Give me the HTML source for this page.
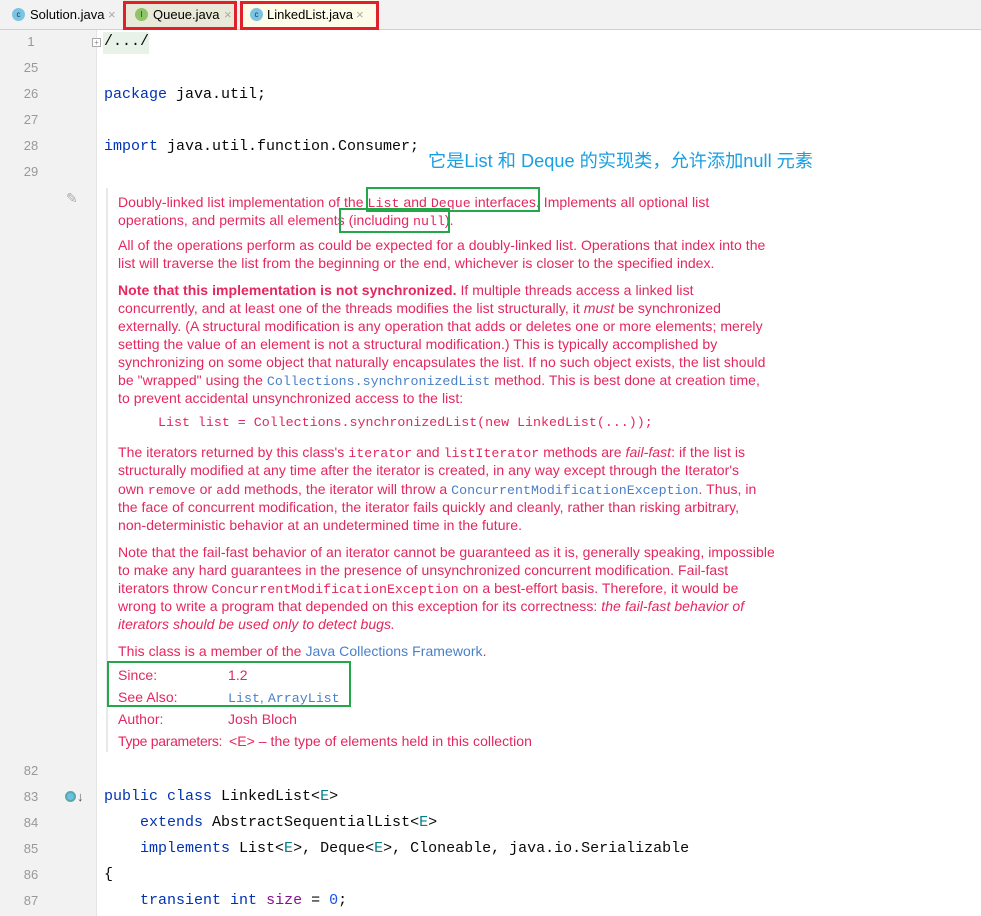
<!DOCTYPE html>
<html><head><meta charset="utf-8"><style>
*{margin:0;padding:0;box-sizing:border-box}
body{width:981px;height:916px;overflow:hidden;background:#fff;position:relative;font-family:"Liberation Sans","Noto Sans CJK SC",sans-serif}
.tabs{position:absolute;left:0;top:0;width:981px;height:30px;background:#f2f2f2;border-bottom:1px solid #d0d0d0}
.tab{position:absolute;top:0;height:30px;font-size:13px;line-height:30px;color:#000}
.ic{position:absolute;top:8px;width:13px;height:13px;border-radius:50%;font-size:8px;line-height:13px;text-align:center;color:#234;font-family:"Liberation Sans",sans-serif}
.x{color:#aaa;position:absolute;top:0;font-size:13px}
.gut{position:absolute;left:0;top:30px;width:97px;height:886px;background:#f2f2f2;border-right:1px solid #e4e4e4}
.ln{position:absolute;left:0;width:62px;text-align:center;font-family:"Liberation Sans",sans-serif;font-size:13px;color:#999}
.code{position:absolute;left:104px;font-family:"Liberation Mono",monospace;font-size:15px;color:#080808;white-space:pre}
.kw{color:#0033b3}.tp{color:#007e8a}.num{color:#1750eb}.fld{color:#871094}
.d{position:absolute;left:118px;font-size:14px;letter-spacing:0.05px;color:#e5265f;white-space:nowrap;line-height:18px}
.m{font-family:"Liberation Mono",monospace;font-size:13.3px;letter-spacing:0}
.l{color:#4a80c8}
.box{position:absolute;border:2px solid #22a84a}
.red{position:absolute;border:3px solid #e0202a}
</style></head><body>
<div class="tabs">
 <div class="tab" style="left:0;width:122px"><div class="ic" style="left:12px;background:#7cc4e4">c</div><span style="position:absolute;left:30px">Solution.java</span><span class="x" style="left:108px">×</span></div>
 <div class="tab" style="left:124px;width:112px;background:#e9e9d9"><div class="ic" style="left:11px;background:#8dc46a">I</div><span style="position:absolute;left:29px">Queue.java</span><span class="x" style="left:100px">×</span></div>
 <div class="tab" style="left:241px;width:137px;background:#fcfce8;border-bottom:2px solid #4083c9"><div class="ic" style="left:9px;background:#7cc4e4">c</div><span style="position:absolute;left:26px">LinkedList.java</span><span class="x" style="left:115px">×</span></div>
</div>
<div class="red" style="left:123px;top:1px;width:114px;height:29px"></div>
<div class="red" style="left:240px;top:1px;width:139px;height:29px"></div>
<div class="gut"></div>
<div style="position:absolute;left:106px;top:188px;width:2px;height:564px;background:#e8e8e8"></div>
<div style="position:absolute;left:92px;top:38px;width:9px;height:9px;border:1px solid #aaa;background:#fff;font-size:8px;line-height:7px;text-align:center;color:#888">+</div>
<div style="position:absolute;left:103px;top:32px;width:46px;height:22px;background:#e8f2e8"></div>
<div style="position:absolute;left:66px;top:190px;width:12px;height:12px;color:#aaa;font-size:14px">✎</div>
<div style="position:absolute;left:65px;top:791px;width:11px;height:11px;border-radius:50%;background:#6cbfe0;border:2px solid #5aa;"></div>
<div style="position:absolute;left:77px;top:789px;font-size:13px;color:#555">↓</div>

<div class="ln" style="top:34px">1</div>
<div class="ln" style="top:60px">25</div>
<div class="ln" style="top:86px">26</div>
<div class="ln" style="top:112px">27</div>
<div class="ln" style="top:138px">28</div>
<div class="ln" style="top:164px">29</div>
<div class="ln" style="top:763px">82</div>
<div class="ln" style="top:789px">83</div>
<div class="ln" style="top:815px">84</div>
<div class="ln" style="top:841px">85</div>
<div class="ln" style="top:867px">86</div>
<div class="ln" style="top:893px">87</div>

<div class="code" style="top:33px">/.../</div>
<div class="code" style="top:86px"><span class="kw">package</span> java.util;</div>
<div class="code" style="top:138px"><span class="kw">import</span> java.util.function.Consumer;</div>
<div style="position:absolute;left:428px;top:147px;font-size:18.2px;color:#1a9fe0;white-space:nowrap">它是List 和 Deque 的实现类，允许添加null 元素</div>
<div class="code" style="top:788px"><span class="kw">public class</span> LinkedList&lt;<span class="tp">E</span>&gt;</div>
<div class="code" style="top:814px">    <span class="kw">extends</span> AbstractSequentialList&lt;<span class="tp">E</span>&gt;</div>
<div class="code" style="top:840px">    <span class="kw">implements</span> List&lt;<span class="tp">E</span>&gt;, Deque&lt;<span class="tp">E</span>&gt;, Cloneable, java.io.Serializable</div>
<div class="code" style="top:866px">{</div>
<div class="code" style="top:892px">    <span class="kw">transient int</span> <span class="fld">size</span> = <span class="num">0</span>;</div>

<div class="d" style="top:193px">Doubly-linked list implementation of the <span class="m">List</span> and <span class="m">Deque</span> interfaces. Implements all optional list</div>
<div class="d" style="top:211px">operations, and permits all elements (including <span class="m">null</span>).</div>
<div class="d" style="top:236px">All of the operations perform as could be expected for a doubly-linked list. Operations that index into the</div>
<div class="d" style="top:254px">list will traverse the list from the beginning or the end, whichever is closer to the specified index.</div>
<div class="d" style="top:281px"><b>Note that this implementation is not synchronized.</b> If multiple threads access a linked list</div>
<div class="d" style="top:299px">concurrently, and at least one of the threads modifies the list structurally, it <i>must</i> be synchronized</div>
<div class="d" style="top:317px">externally. (A structural modification is any operation that adds or deletes one or more elements; merely</div>
<div class="d" style="top:335px">setting the value of an element is not a structural modification.) This is typically accomplished by</div>
<div class="d" style="top:353px">synchronizing on some object that naturally encapsulates the list. If no such object exists, the list should</div>
<div class="d" style="top:371px">be "wrapped" using the <span class="m l">Collections.synchronizedList</span> method. This is best done at creation time,</div>
<div class="d" style="top:389px">to prevent accidental unsynchronized access to the list:</div>
<div class="d m" style="top:414px;left:158px">List list = Collections.synchronizedList(new LinkedList(...));</div>
<div class="d" style="top:443px">The iterators returned by this class's <span class="m">iterator</span> and <span class="m">listIterator</span> methods are <i>fail-fast</i>: if the list is</div>
<div class="d" style="top:461px">structurally modified at any time after the iterator is created, in any way except through the Iterator's</div>
<div class="d" style="top:480px">own <span class="m">remove</span> or <span class="m">add</span> methods, the iterator will throw a <span class="m l">ConcurrentModificationException</span>. Thus, in</div>
<div class="d" style="top:498px">the face of concurrent modification, the iterator fails quickly and cleanly, rather than risking arbitrary,</div>
<div class="d" style="top:516px">non-deterministic behavior at an undetermined time in the future.</div>
<div class="d" style="top:543px">Note that the fail-fast behavior of an iterator cannot be guaranteed as it is, generally speaking, impossible</div>
<div class="d" style="top:561px">to make any hard guarantees in the presence of unsynchronized concurrent modification. Fail-fast</div>
<div class="d" style="top:579px">iterators throw <span class="m">ConcurrentModificationException</span> on a best-effort basis. Therefore, it would be</div>
<div class="d" style="top:597px">wrong to write a program that depended on this exception for its correctness: <i>the fail-fast behavior of</i></div>
<div class="d" style="top:615px"><i>iterators should be used only to detect bugs.</i></div>
<div class="d" style="top:642px">This class is a member of the <span class="l">Java Collections Framework</span>.</div>
<div class="d" style="top:666px">Since:</div><div class="d" style="top:666px;left:228px">1.2</div>
<div class="d" style="top:688px">See Also:</div><div class="d" style="top:688px;left:228px"><span class="m l">List</span><span class="l">, </span><span class="m l">ArrayList</span></div>
<div class="d" style="top:710px">Author:</div><div class="d" style="top:710px;left:228px">Josh Bloch</div>
<div class="d" style="top:732px;letter-spacing:-0.3px">Type parameters:</div><div class="d" style="top:732px;left:229px">&lt;E&gt; – the type of elements held in this collection</div>

<div class="box" style="left:366px;top:187px;width:174px;height:25px"></div>
<div class="box" style="left:339px;top:208px;width:111px;height:25px"></div>
<div class="box" style="left:107px;top:661px;width:244px;height:46px"></div>
</body></html>
